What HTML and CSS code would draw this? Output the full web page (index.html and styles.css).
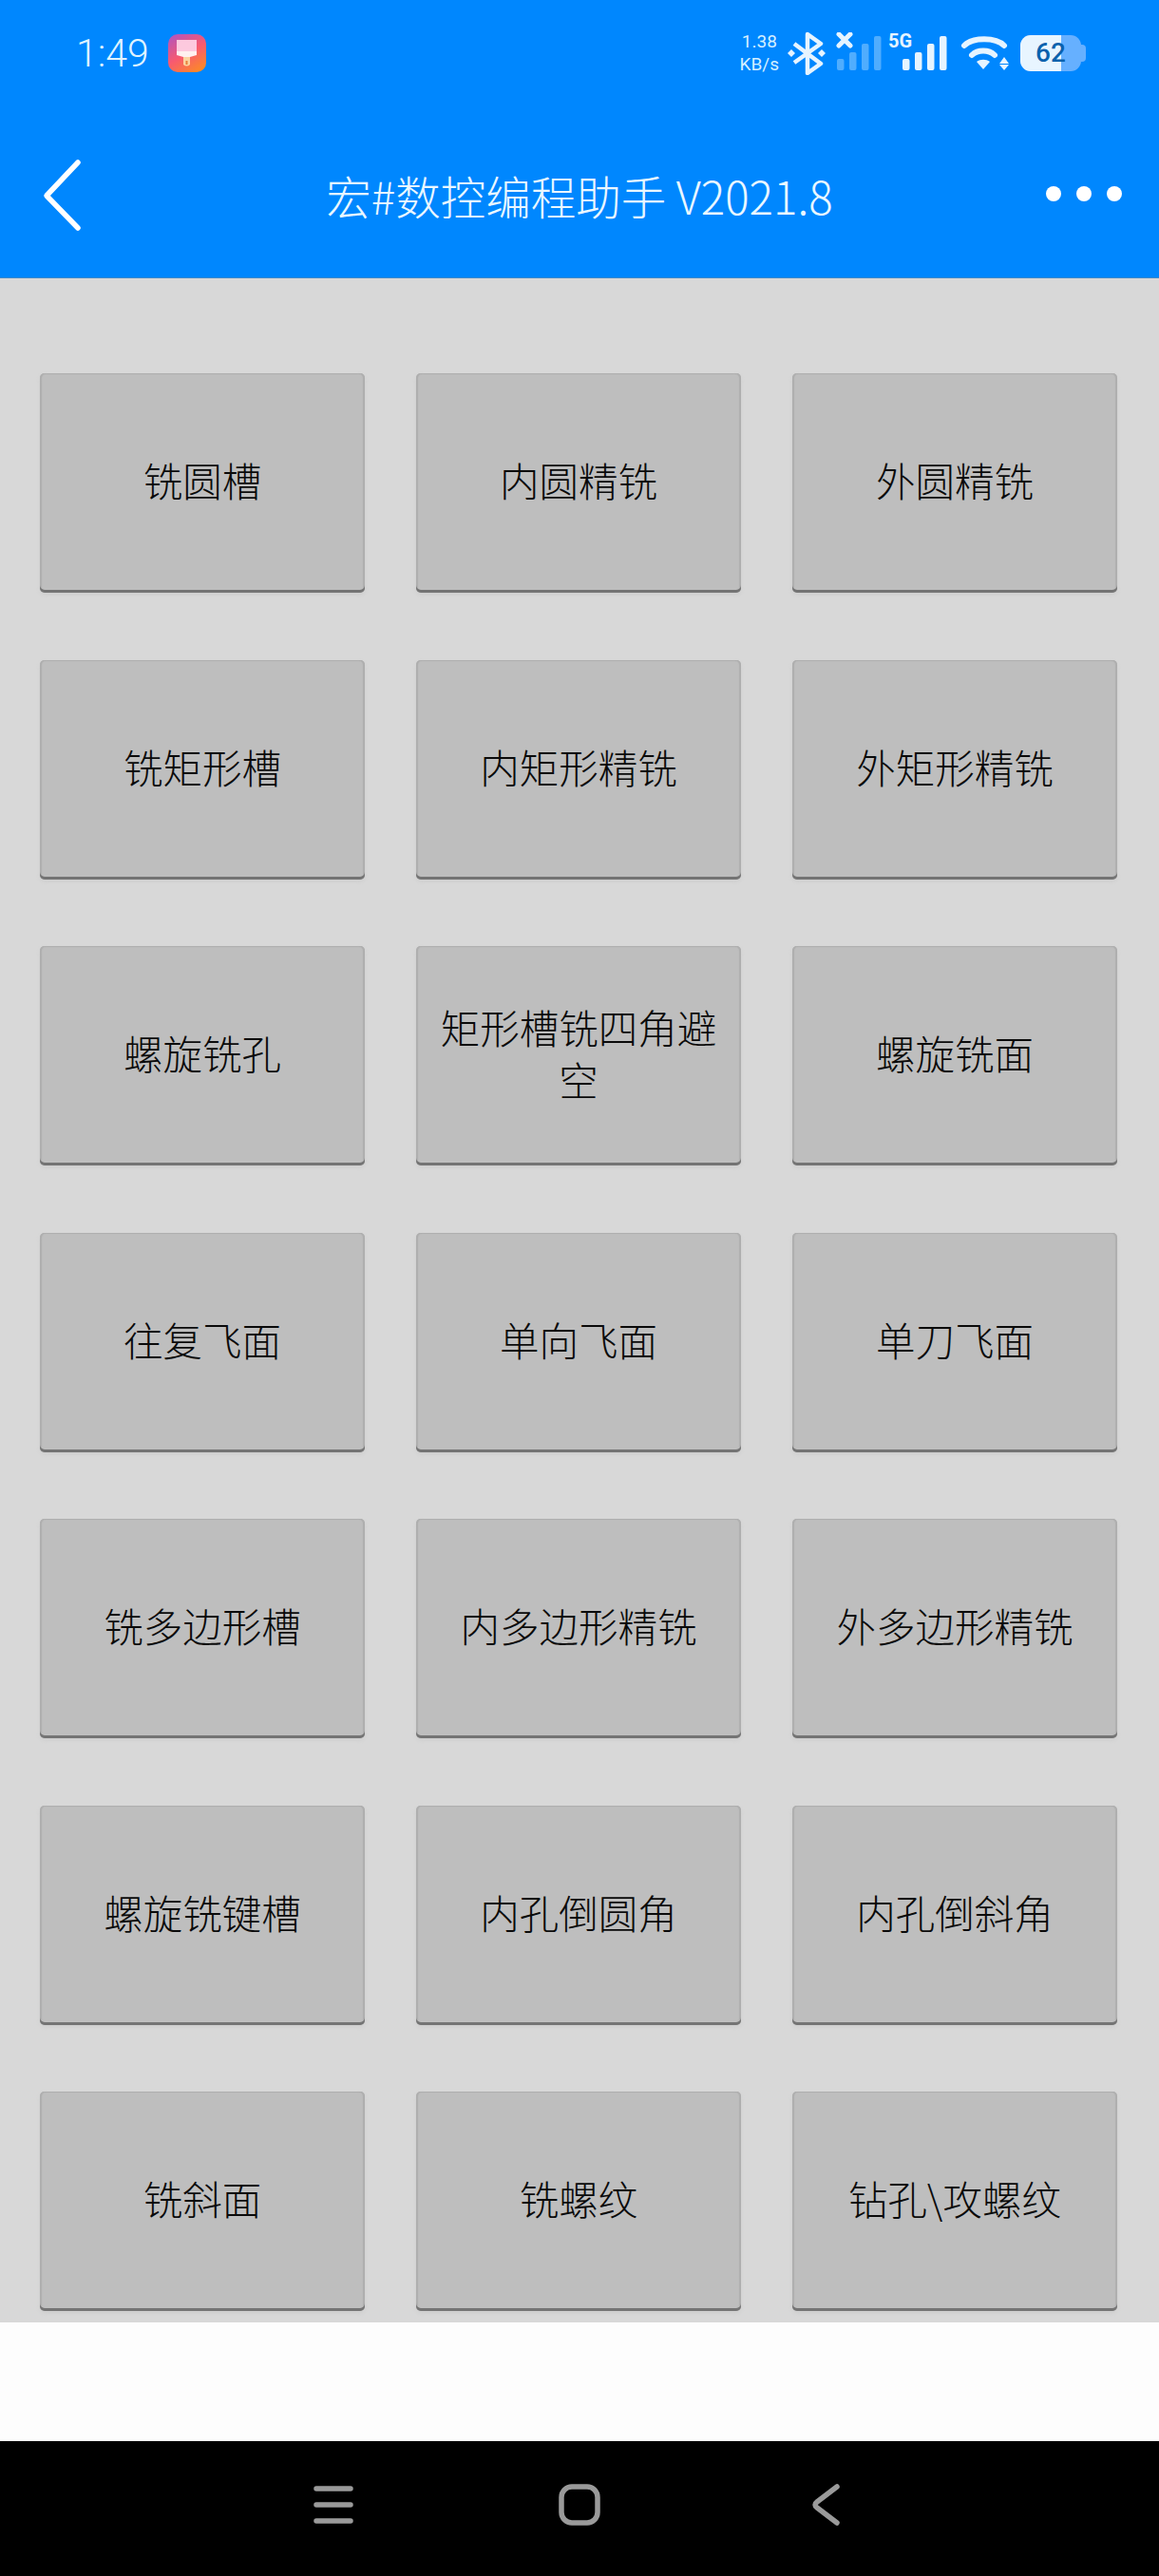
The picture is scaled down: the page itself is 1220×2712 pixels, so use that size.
FILE: index.html
```html
<!DOCTYPE html>
<html lang="zh-CN">
<head>
    <meta charset="UTF-8">
    <meta name="viewport" content="width=device-width, initial-scale=1.0">
    <title>宏#数控编程助手</title>
    <link rel="stylesheet" href="styles.css">
</head>
<body>
    <div class="top">
        <div class="status-bar">
            <div class="status-left">
                <span class="time">1:49</span>
                <svg class="brush" width="40" height="40" viewBox="0 0 40 40">
                    <defs>
                        <linearGradient id="brushBg" x1="0.2" y1="0" x2="0.8" y2="1">
                            <stop offset="0" stop-color="#b855b8"/>
                            <stop offset="0.5" stop-color="#f85a70"/>
                            <stop offset="1" stop-color="#fb8a26"/>
                        </linearGradient>
                    </defs>
                    <rect width="40" height="40" rx="10" fill="url(#brushBg)"/>
                    <path d="M9 6h21v12H9z" fill="#fdc9de"/>
                    <path d="M9 18h21v4l-7 2H16l-7-2z" fill="#fff0f0"/>
                    <path d="M16 24h7v8q-3.500 3-7 0z" fill="#fbd3a0"/>
                    <path d="M18.500 28h2v4h-2z" fill="#e8803a"/>
                </svg>
            </div>
            <div class="status-right">
                <div class="speed"><span>1.38</span><span>KB/s</span></div>
                <svg width="42" height="46" viewBox="0 0 42 46" class="bt">
                    <path d="M8 13l28 21-14 10V3l14 10L8 33" fill="none" stroke="#e6f4ff" stroke-width="4.500" stroke-linejoin="round"/>
                    <path d="M5 19l4 4-4 4-4-4zM37 19l4 4-4 4-4-4z" fill="#e6f4ff"/>
                </svg>
                <svg width="48" height="44" viewBox="0 0 48 44" class="sim1">
                    <path d="M3 2l12 12M15 2L3 14" stroke="#e6f4ff" stroke-width="5" stroke-linecap="round"/>
                    <g fill="#e6f4ff" opacity="0.35">
                        <rect x="1" y="28" width="7.500" height="12" rx="2"/>
                        <rect x="14" y="21" width="7.500" height="19" rx="2"/>
                        <rect x="27" y="12" width="7.500" height="28" rx="2"/>
                        <rect x="40" y="4" width="7.500" height="36" rx="2"/>
                    </g>
                </svg>
                <div class="sim2">
                    <span class="five-g">5G</span>
                    <svg width="48" height="37" viewBox="0 0 48 37">
                        <g fill="#e6f4ff">
                            <rect x="1" y="25" width="7.500" height="12" rx="2"/>
                            <rect x="14" y="18" width="7.500" height="19" rx="2"/>
                            <rect x="27" y="9" width="7.500" height="28" rx="2"/>
                            <rect x="40" y="1" width="7.500" height="36" rx="2"/>
                        </g>
                    </svg>
                </div>
                <svg width="52" height="38" viewBox="0 0 52 38" class="wifi">
                    <path d="M5 11C14 2 38 2 47 11" fill="none" stroke="#e6f4ff" stroke-width="6" stroke-linecap="round"/>
                    <path d="M13 21C19 15 31 15 37 21" fill="none" stroke="#e6f4ff" stroke-width="6" stroke-linecap="round"/>
                    <path d="M18 28c4-3 10-3 14 0l-7 8z" fill="#e6f4ff"/>
                    <path d="M42 30l5-7 5 7zM42 31h10l-5 6z" fill="#e6f4ff"/>
                </svg>
                <div class="battery">
                    <div class="battery-fill"></div>
                    <span class="battery-num">62</span>
                </div>
            </div>
        </div>
        <div class="title-bar">
            <svg class="back" width="50" height="80" viewBox="0 0 50 80">
                <path d="M38 5L5 40l33 34" fill="none" stroke="#fff" stroke-width="5.500" stroke-linecap="round" stroke-linejoin="round"/>
            </svg>
            <div class="title">宏#数控编程助手 V2021.8</div>
            <div class="dots"><i></i><i></i><i></i></div>
        </div>
    </div>

    <div class="menu">
        <div class="btn">铣圆槽</div>
        <div class="btn">内圆精铣</div>
        <div class="btn">外圆精铣</div>
        <div class="btn">铣矩形槽</div>
        <div class="btn">内矩形精铣</div>
        <div class="btn">外矩形精铣</div>
        <div class="btn">螺旋铣孔</div>
        <div class="btn">矩形槽铣四角避空</div>
        <div class="btn">螺旋铣面</div>
        <div class="btn">往复飞面</div>
        <div class="btn">单向飞面</div>
        <div class="btn">单刀飞面</div>
        <div class="btn">铣多边形槽</div>
        <div class="btn">内多边形精铣</div>
        <div class="btn">外多边形精铣</div>
        <div class="btn">螺旋铣键槽</div>
        <div class="btn">内孔倒圆角</div>
        <div class="btn">内孔倒斜角</div>
        <div class="btn">铣斜面</div>
        <div class="btn">铣螺纹</div>
        <div class="btn">钻孔\攻螺纹</div>
    </div>

    <div class="blank"></div>

    <div class="nav-bar">
        <svg width="42" height="40" viewBox="0 0 42 40">
            <path d="M3 3h36M3 20h36M3 37h36" stroke="#9a9a9a" stroke-width="5.500" stroke-linecap="round"/>
        </svg>
        <svg class="nav-home" width="44" height="44" viewBox="0 0 44 44">
            <rect x="3" y="3" width="38" height="38" rx="11" fill="none" stroke="#9a9a9a" stroke-width="5.500"/>
        </svg>
        <svg width="30" height="44" viewBox="0 0 30 44">
            <path d="M26 3L5 19q-4 3 0 6l21 16" fill="none" stroke="#9a9a9a" stroke-width="5.500" stroke-linecap="round"/>
        </svg>
    </div>
</body>
</html>
```

FILE: styles.css
```css
body {
    margin: 0;
    height: 2712px;
    display: flex;
    flex-direction: column;
    overflow: hidden;
    font-family: "Noto Sans CJK SC", "Noto Sans", sans-serif;
    background-color: #fff;
}

.top {
    height: 293px;
    background-color: #0087fe;
    color: #fff;
    flex: none;
    border-bottom: 1px solid #3f89c8;
    box-sizing: border-box;
}

.status-bar {
    height: 112px;
    display: flex;
    justify-content: space-between;
    align-items: center;
    padding: 0 77px 0 80px;
}

.status-left {
    display: flex;
    align-items: center;
    gap: 20px;
}

.time {
    font-family: Roboto, sans-serif;
    font-weight: 300;
    font-size: 41px;
    color: #dff3ff;
}

.status-right {
    display: flex;
    align-items: center;
    gap: 10px;
}

.speed {
    display: flex;
    flex-direction: column;
    align-items: center;
    font-family: Roboto, sans-serif;
    font-size: 19px;
    line-height: 24px;
    color: #d5efff;
    margin-right: -2px;
}

.sim2 {
    position: relative;
    width: 62px;
    height: 44px;
    margin-left: -3px;
    display: flex;
    justify-content: flex-end;
    align-items: flex-start;
    padding-top: 3px;
    box-sizing: border-box;
}

.five-g {
    position: absolute;
    left: 0;
    top: -3px;
    font-family: Roboto, sans-serif;
    font-weight: 700;
    font-size: 20px;
    line-height: 24px;
    color: #e6f4ff;
}

.wifi {
    margin-left: 3px;
}

.battery {
    position: relative;
    width: 64px;
    height: 38px;
    margin: 0 5px 0 2px;
    border-radius: 11px;
    background-color: #66b0ff;
}

/* nub on the right end of the battery */
.battery::after {
    content: "";
    position: absolute;
    right: -5px;
    top: 10px;
    width: 5px;
    height: 18px;
    border-radius: 0 4px 4px 0;
    background-color: #66b0ff;
}

.battery-fill {
    width: 43px;
    height: 100%;
    border-radius: 11px 0 0 11px;
    background-color: #e8f5ff;
}

.battery-num {
    position: absolute;
    left: 16px;
    top: 0;
    font-family: Roboto, sans-serif;
    font-weight: 500;
    font-size: 28px;
    line-height: 38px;
    color: #0a62ad;
}

.title-bar {
    height: 180px;
    position: relative;
    display: flex;
    justify-content: space-between;
    align-items: center;
    padding: 0 39px 0 44px;
    box-sizing: border-box;
}

.back {
    margin-top: 8px;
}

.title {
    position: absolute;
    left: 0;
    right: 0;
    top: 0;
    line-height: 187px;
    text-align: center;
    font-size: 47.5px;
    font-weight: 300;
    color: #eaf7ff;
}

.dots {
    display: flex;
    gap: 16px;
    margin-top: 4px;
}

.dots i {
    display: block;
    width: 16px;
    height: 16px;
    border-radius: 50%;
    background-color: #fff;
}

.menu {
    height: 2152px;
    flex: none;
    box-sizing: border-box;
    overflow: hidden;
    padding: 100px 0 0 42px;
    background-color: #d8d8d8;
    display: grid;
    grid-template-columns: repeat(3, 342px);
    grid-auto-rows: 231px;
    column-gap: 54px;
    row-gap: 70.5px;
}

.btn {
    box-sizing: border-box;
    padding: 0 20px 6px;
    display: flex;
    justify-content: center;
    align-items: center;
    text-align: center;
    font-size: 41.5px;
    font-weight: 300;
    line-height: 55px;
    color: #0a0a0a;
    background-color: #bebebe;
    border-radius: 5px;
    box-shadow: inset 0 -3px 0 #747474, inset 2px 0 1px #aeaeae, inset -2px 0 1px #aeaeae, inset 0 1px 1px #b0b0b0, 0 2px 4px #cdcdcd;
}

.blank {
    flex: 1;
    background-color: #fdfdfd;
}

.nav-bar {
    height: 142px;
    flex: none;
    box-sizing: border-box;
    padding: 0 0 8px 330px;
    background-color: #000;
    display: flex;
    align-items: center;
}

.nav-home {
    margin: 0 223px 0 216px;
}
```
